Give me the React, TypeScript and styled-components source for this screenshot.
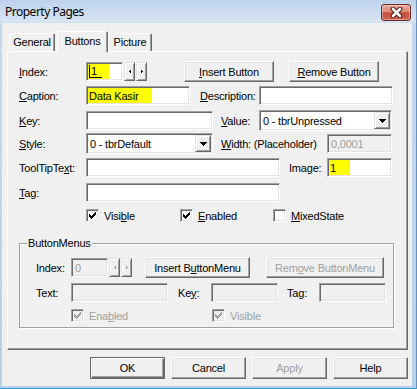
import styled, { createGlobalStyle } from "styled-components";

const GlobalStyle = createGlobalStyle`
  html, body {
    margin: 0;
    padding: 0;
    background: #fff;
  }
  body {
    font-family: "Liberation Sans", Arial, sans-serif;
    font-size: 11px;
    letter-spacing: -0.2px;
    color: #000;
  }
`;

const Window = styled.div`
  box-sizing: border-box;
  width: 417px;
  height: 389px;
  display: flex;
  flex-direction: column;
  padding: 0 4px 2px 2px;
  background: linear-gradient(#bdd3eb, #d8e5f3 22px, #c5d9ee 23px, #b9d0ea);
  border-right: 1px solid #6a90bb;
  border-bottom: 1px solid #3a9fd3;
`;

const TitleBar = styled.div`
  flex: none;
  height: 23px;
  display: flex;
  align-items: flex-start;
  justify-content: space-between;
`;

const Title = styled.span`
  margin: 3px 0 0 3px;
  font-family: "Noto Sans", "Open Sans", sans-serif;
  font-size: 12px;
  line-height: 17px;
  letter-spacing: -0.5px;
`;

const CloseButton = styled.div`
  box-sizing: border-box;
  width: 30px;
  height: 17px;
  margin: 4px 1px 0 0;
  border: 1px solid #6e2b24;
  border-radius: 3px;
  background: linear-gradient(#e8a698 0%, #dc8a78 45%, #c64c3c 52%, #d06352 100%);
  box-shadow: inset 0 0 0 1px rgba(255, 255, 255, 0.35);
  display: flex;
  align-items: center;
  justify-content: center;
`;

const Client = styled.div`
  flex: 1;
  display: flex;
  flex-direction: column;
  background: #f0f0f0;
  padding: 8px 4px 0 5px;
`;

const TabStrip = styled.div`
  display: flex;
  align-items: flex-end;
  height: 20px;
  padding-left: 2px;
  position: relative;
  z-index: 1;
`;

const Tab = styled.div<{ $active?: boolean; $w: number; $ml?: number }>`
  box-sizing: border-box;
  width: ${(p) => p.$w}px;
  height: ${(p) => (p.$active ? 21 : 18)}px;
  margin-left: ${(p) => p.$ml ?? 0}px;
  margin-bottom: ${(p) => (p.$active ? -1 : 0)}px;
  background: #f0f0f0;
  border: 1px solid;
  border-bottom: none;
  border-color: #fff #696969 transparent #fff;
  border-radius: 2px 2px 0 0;
  box-shadow: inset -1px 0 #a0a0a0;
  display: flex;
  align-items: center;
  justify-content: center;
  padding-bottom: ${(p) => (p.$active ? 3 : 1)}px;
  white-space: nowrap;
`;

const Panel = styled.div`
  box-sizing: border-box;
  width: 401px;
  height: 299px;
  border: 1px solid;
  border-color: #fff #696969 #696969 #fff;
  box-shadow: inset -1px -1px #a0a0a0;
  padding: 9px 0 0 11px;
  display: flex;
  flex-direction: column;
`;

const Row = styled.div<{ $mt?: number; $h: number }>`
  display: flex;
  align-items: center;
  height: ${(p) => p.$h}px;
  margin-top: ${(p) => p.$mt ?? 0}px;
`;

const Label = styled.span<{ $w: number; $ml?: number; $off?: boolean }>`
  flex: none;
  width: ${(p) => p.$w}px;
  margin-left: ${(p) => p.$ml ?? 0}px;
  white-space: nowrap;
  color: ${(p) => (p.$off ? "#a0a0a0" : "#000")};
`;

const U = styled.span`
  text-decoration: underline;
  text-underline-offset: 1px;
`;

const TextBox = styled.div<{ $w: number; $h?: number; $ml?: number; $off?: boolean }>`
  box-sizing: border-box;
  flex: none;
  width: ${(p) => p.$w}px;
  height: ${(p) => p.$h ?? 19}px;
  margin-left: ${(p) => p.$ml ?? 0}px;
  border: 1px solid;
  border-color: #a0a0a0 #fff #fff #a0a0a0;
  box-shadow: inset 1px 1px #696969, inset -1px -1px #e3e3e3;
  background: ${(p) => (p.$off ? "#f0f0f0" : "#fff")};
  color: ${(p) => (p.$off ? "#a0a0a0" : "#000")};
  padding: 1px;
  display: flex;
  align-items: stretch;
  justify-content: space-between;
  white-space: nowrap;
`;

const Value = styled.span`
  display: flex;
  align-items: center;
  padding-left: 2px;
`;

const Marked = styled.span<{ $w: number }>`
  display: flex;
  align-items: center;
  width: ${(p) => p.$w}px;
  padding-left: 1px;
  background: #ffff00;
`;

const Caret = styled.span`
  display: inline-block;
  width: 11px;
  height: 12px;
  line-height: 12px;
  border-left: 1px solid #000;
  border-bottom: 1px solid #000;
  padding-left: 1px;
`;

const DropButton = styled.span`
  box-sizing: border-box;
  flex: none;
  width: 16px;
  border: 1px solid;
  border-color: #e3e3e3 #696969 #696969 #e3e3e3;
  box-shadow: inset 1px 1px #fff, inset -1px -1px #a0a0a0;
  background: #f0f0f0;
  display: flex;
  align-items: center;
  justify-content: center;
`;

const Spin = styled.span<{ $ml?: number }>`
  box-sizing: border-box;
  flex: none;
  width: 11px;
  height: 19px;
  margin-left: ${(p) => p.$ml ?? 1}px;
  border: 1px solid;
  border-color: #e3e3e3 #696969 #696969 #e3e3e3;
  box-shadow: inset 1px 1px #fff, inset -1px -1px #a0a0a0;
  background: #f0f0f0;
  display: flex;
  align-items: center;
  justify-content: center;
`;

const Button = styled.div<{ $w: number; $h?: number; $ml?: number; $off?: boolean; $default?: boolean }>`
  box-sizing: border-box;
  flex: none;
  width: ${(p) => p.$w}px;
  height: ${(p) => p.$h ?? 21}px;
  margin-left: ${(p) => p.$ml ?? 0}px;
  border: 1px solid;
  border-color: ${(p) => (p.$default ? "#696969" : "#fff #696969 #696969 #fff")};
  box-shadow: ${(p) =>
    p.$default
      ? "inset 1px 1px #fff, inset -1px -1px #696969, inset -2px -2px #a0a0a0"
      : "inset -1px -1px #a0a0a0, inset 1px 1px #e3e3e3"};
  background: #f0f0f0;
  color: ${(p) => (p.$off ? "#a0a0a0" : "#000")};
  display: flex;
  align-items: center;
  justify-content: center;
  white-space: nowrap;
`;

const Check = styled.label<{ $w?: number; $off?: boolean }>`
  flex: none;
  width: ${(p) => (p.$w ? `${p.$w}px` : "auto")};
  display: flex;
  align-items: center;
  gap: 5px;
  color: ${(p) => (p.$off ? "#a0a0a0" : "#000")};
  white-space: nowrap;
`;

const CheckBox = styled.span<{ $off?: boolean }>`
  box-sizing: border-box;
  flex: none;
  width: 13px;
  height: 13px;
  border: 1px solid;
  border-color: #a0a0a0 #fff #fff #a0a0a0;
  box-shadow: inset 1px 1px #696969, inset -1px -1px #e3e3e3;
  background: ${(p) => (p.$off ? "#f0f0f0" : "#fff")};
  display: flex;
  align-items: center;
  justify-content: center;
`;

const Group = styled.fieldset`
  box-sizing: border-box;
  width: 375px;
  min-inline-size: auto;
  margin: 14px 0 0 0;
  padding: 7px 0 4px 7px;
  border: 1px solid #a0a0a0;
  box-shadow: inset 1px 1px #fff, 1px 1px #fff;
`;

const Legend = styled.legend`
  margin: 0;
  padding: 0 1px;
  line-height: 13px;
  background: #f0f0f0;
`;

const GroupBody = styled.div`
  padding-left: 9px;
`;

const Footer = styled.div`
  display: flex;
  justify-content: flex-end;
  gap: 6px;
  margin-top: 7px;
`;

function Tick({ off }: { off?: boolean }) {
  return (
    <svg width="7" height="7" viewBox="0 0 7 7" shapeRendering="crispEdges">
      <path
        d="M0 2h1v3h-1zM1 3h1v3h-1zM2 4h1v3h-1zM3 3h1v3h-1zM4 2h1v3h-1zM5 1h1v3h-1zM6 0h1v3h-1z"
        fill={off ? "#a0a0a0" : "#000"}
      />
    </svg>
  );
}

function CheckItem({
  checked,
  off,
  w,
  children,
}: {
  checked?: boolean;
  off?: boolean;
  w?: number;
  children: React.ReactNode;
}) {
  return (
    <Check $w={w} $off={off}>
      <CheckBox $off={off}>{checked && <Tick off={off} />}</CheckBox>
      <span>{children}</span>
    </Check>
  );
}

function Arrow({ dir, off }: { dir: "left" | "right"; off?: boolean }) {
  const d = dir === "left" ? "M1 0h1v3h-1zM0 1h1v1h-1z" : "M0 0h1v3h-1zM1 1h1v1h-1z";
  return (
    <svg width="2" height="3" viewBox="0 0 2 3" shapeRendering="crispEdges">
      <path d={d} fill={off ? "#a0a0a0" : "#000"} />
    </svg>
  );
}

function SpinPair({ off }: { off?: boolean }) {
  return (
    <>
      <Spin $ml={1}>
        <Arrow dir="left" off={off} />
      </Spin>
      <Spin $ml={1}>
        <Arrow dir="right" off={off} />
      </Spin>
    </>
  );
}

function Combo({ w, ml, text }: { w: number; ml?: number; text: string }) {
  return (
    <TextBox $w={w} $h={21} $ml={ml}>
      <Value>{text}</Value>
      <DropButton>
        <svg width="7" height="4" viewBox="0 0 7 4" shapeRendering="crispEdges">
          <path d="M0 0h7v1h-1v1h-1v1h-1v1h-1v-1h-1v-1h-1v-1h-1z" fill="#000" />
        </svg>
      </DropButton>
    </TextBox>
  );
}

export default function App() {
  return (
    <>
      <GlobalStyle />
      <Window>
        <TitleBar>
          <Title>Property Pages</Title>
          <CloseButton>
            <svg width="13" height="11" viewBox="0 0 13 11">
              <path d="M3 2L10 9M10 2L3 9" stroke="#5a1a14" strokeWidth="4.6" strokeLinecap="round" />
              <path d="M3 2L10 9M10 2L3 9" stroke="#fff" strokeWidth="2.6" strokeLinecap="round" />
            </svg>
          </CloseButton>
        </TitleBar>

        <Client>
          <TabStrip>
            <Tab $w={46}>General</Tab>
            <Tab $w={51} $ml={2} $active>
              Buttons
            </Tab>
            <Tab $w={44}>Picture</Tab>
          </TabStrip>

          <Panel>
            <Row $h={21}>
              <Label $w={67}>
                <U>I</U>ndex:
              </Label>
              <TextBox $w={37}>
                <Marked $w={20}>
                  <Caret>1</Caret>
                </Marked>
              </TextBox>
              <SpinPair />
              <Button $w={90} $ml={37}>
                <span>
                  <U>I</U>nsert Button
                </span>
              </Button>
              <Button $w={90} $ml={15}>
                <span>
                  <U>R</U>emove Button
                </span>
              </Button>
            </Row>

            <Row $mt={4} $h={19}>
              <Label $w={67}>
                <U>C</U>aption:
              </Label>
              <TextBox $w={104}>
                <Marked $w={63}>Data Kasir</Marked>
              </TextBox>
              <Label $w={59} $ml={10}>
                <U>D</U>escription:
              </Label>
              <TextBox $w={134} />
            </Row>

            <Row $mt={5} $h={21}>
              <Label $w={67}>
                <U>K</U>ey:
              </Label>
              <TextBox $w={127} />
              <Label $w={38} $ml={8}>
                <U>V</U>alue:
              </Label>
              <Combo w={133} text="0 - tbrUnpressed" />
            </Row>

            <Row $mt={2} $h={21}>
              <Label $w={67}>
                <U>S</U>tyle:
              </Label>
              <Combo w={127} text="0 - tbrDefault" />
              <Label $w={106} $ml={8}>
                <U>W</U>idth: (Placeholder)
              </Label>
              <TextBox $w={65} $off>
                <Value>0,0001</Value>
              </TextBox>
            </Row>

            <Row $mt={4} $h={19}>
              <Label $w={67}>
                ToolTipTe<U>x</U>t:
              </Label>
              <TextBox $w={194} />
              <Label $w={38} $ml={9}>
                Ima<U>g</U>e:
              </Label>
              <TextBox $w={65}>
                <Marked $w={20}>1</Marked>
              </TextBox>
            </Row>

            <Row $mt={6} $h={19}>
              <Label $w={67}>
                <U>T</U>ag:
              </Label>
              <TextBox $w={194} />
            </Row>

            <Row $mt={6} $h={15}>
              <Label $w={67} />
              <CheckItem checked w={94}>
                Visi<U>b</U>le
              </CheckItem>
              <CheckItem checked w={93}>
                <U>E</U>nabled
              </CheckItem>
              <CheckItem>
                <U>M</U>ixedState
              </CheckItem>
            </Row>

            <Group>
              <Legend>ButtonMenus</Legend>
              <GroupBody>
                <Row $h={21}>
                  <Label $w={35}>Index:</Label>
                  <TextBox $w={37} $off>
                    <Value>0</Value>
                  </TextBox>
                  <SpinPair off />
                  <Button $w={105} $ml={13}>
                    <span>
                      Insert B<U>u</U>ttonMenu
                    </span>
                  </Button>
                  <Button $w={118} $ml={16} $off>
                    <span>
                      Rem<U>o</U>ve ButtonMenu
                    </span>
                  </Button>
                </Row>
                <Row $mt={5} $h={19}>
                  <Label $w={35}>Text:</Label>
                  <TextBox $w={97} $off />
                  <Label $w={33} $ml={10}>
                    Ke<U>y</U>:
                  </Label>
                  <TextBox $w={67} $off />
                  <Label $w={32} $ml={9}>
                    Tag:
                  </Label>
                  <TextBox $w={67} $off />
                </Row>
                <Row $mt={6} $h={15}>
                  <Label $w={35} />
                  <CheckItem checked off w={141}>
                    Ena<U>b</U>led
                  </CheckItem>
                  <CheckItem checked off>
                    Visible
                  </CheckItem>
                </Row>
              </GroupBody>
            </Group>
          </Panel>

          <Footer>
            <Button $w={75} $h={22} $default>
              OK
            </Button>
            <Button $w={75} $h={22}>
              Cancel
            </Button>
            <Button $w={75} $h={22} $off>
              Apply
            </Button>
            <Button $w={75} $h={22}>
              Help
            </Button>
          </Footer>
        </Client>
      </Window>
    </>
  );
}
